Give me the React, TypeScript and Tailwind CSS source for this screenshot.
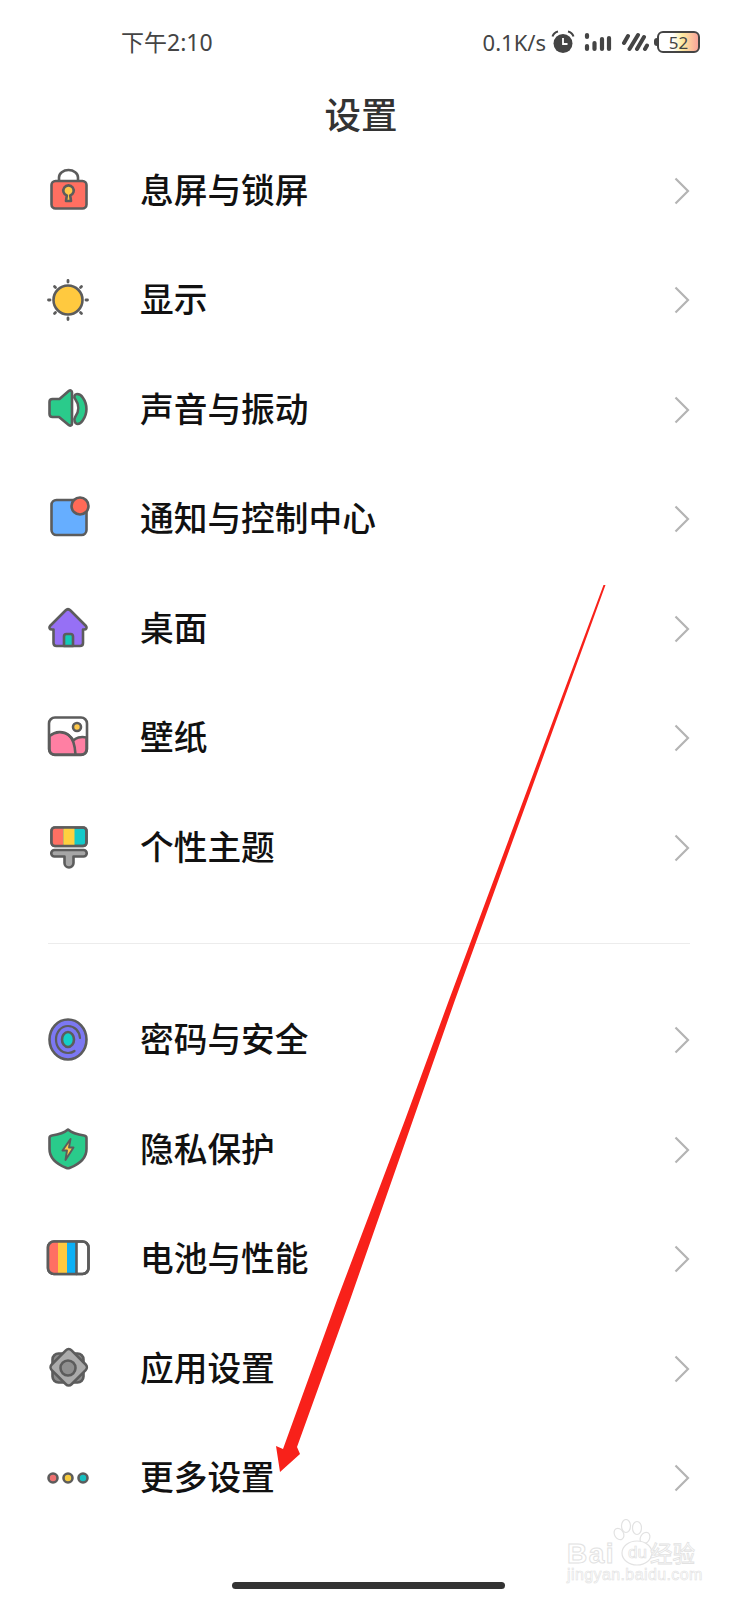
import type { ReactNode } from "react";

const ink = "#5c5c5c";

function Icon({ children }: { children: ReactNode }) {
  return (
    <svg width="48" height="48" viewBox="0 0 48 48" fill="none" stroke={ink} strokeWidth="2.600" strokeLinejoin="round" strokeLinecap="round" className="shrink-0">
      {children}
    </svg>
  );
}

const LockIcon = (
  <Icon>
    <path d="M15 14v-3.500a9.500 7.500 0 0 1 19 0V14" />
    <rect x="7.500" y="14" width="35" height="27.500" rx="4" fill="#FF6F61" />
    <path d="M22.500 34.500l.8-5.500a5.200 5.200 0 1 1 3.400 0l.8 5.500z" fill="#FFC94A" transform="translate(-.5 -.5)" />
  </Icon>
);

const SunIcon = (
  <Icon>
    <circle cx="24" cy="24" r="14.500" fill="#FFC93F" />
    <g strokeWidth="2.800">
      <path d="M24 4.500v1.500M24 42v1.500M4.500 24H6M42 24h1.500M10.500 10.500l1 1M36.500 36.500l1 1M37.500 10.500l-1 1M11.500 36.500l-1 1" />
    </g>
  </Icon>
);

const SoundIcon = (
  <Icon>
    <path d="M8.500 12h7L25 3.800c1.500-1 3-.3 3 1.700v31c0 2-1.500 2.700-3 1.700L15 30H8.500C6.500 30 5.500 29 5.500 27V15c0-2 1-3 3-3z" fill="#2ACB8B" transform="translate(0 1)" />
    <path d="M33 8c-2.500 0-3.500 3 -1.800 5 4 5.500 4 12.500 0 18-1.700 2.500-.5 7 2.500 7 2.500 0 4-2 5-3.500 5-7 5-16 0-23C37.500 9.500 35.500 8 33 8z" fill="#2ACB8B" />
  </Icon>
);

const NotifyIcon = (
  <Icon>
    <rect x="7.500" y="5" width="35" height="35" rx="5" fill="#66AEFF" />
    <circle cx="36" cy="11" r="8.500" fill="#FF6A57" />
  </Icon>
);

const HomeIcon = (
  <Icon>
    <path d="M9.500 24.500H8c-2.500 0-3.200-2-2-3.500L21.500 5.500c1.500-1.500 3.500-1.500 5 0L42 21c1.200 1.500.5 3.500-2 3.500h-1v13.500c0 2-1 3-3 3H12.500c-2 0-3-1-3-3z" fill="#9670F5" />
    <path d="M20 41V31.500c0-1.500 1-2.500 2.500-2.500h4c1.500 0 2.500 1 2.500 2.500V41z" fill="#14C9B8" />
  </Icon>
);

const WallpaperIcon = (
  <Icon>
    <rect x="5" y="3.500" width="38" height="37.500" rx="6" fill="#fff" />
    <path d="M5.500 22c6-5 14-5 19 -1 2.500 2 4 4 5 5.500 2-2.500 7-4.500 13-3V35c0 3.500-2 5.500-5.500 5.500h-26C7.500 40.500 5.500 38.500 5.500 35z" fill="#FF7FA3" />
    <path d="M24.500 21c4.500 3.500 6.500 9.500 7 19.500" />
    <circle cx="33" cy="13" r="4" fill="#FFC94A" />
  </Icon>
);

const ThemeIcon = (
  <Icon>
    <rect x="7.500" y="3.500" width="35" height="18.500" rx="3.500" fill="#14C9C9" />
    <path d="M11 3.500h8.500V22H11c-2.300 0-3.500-1.200-3.500-3.500v-11C7.500 4.700 8.700 3.500 11 3.500z" fill="#FF7063" stroke="none" />
    <rect x="19.500" y="3.500" width="11" height="18.500" fill="#FFD03F" stroke="none" />
    <rect x="7.500" y="3.500" width="35" height="18.500" rx="3.500" />
    <path d="M10.500 26h29a3 3 0 0 1 0 6.500H29.500V39a4.500 4.500 0 0 1-9 0v-6.500h-10a3 3 0 0 1 0-6.500z" fill="#A6A6A6" />
  </Icon>
);

const PasswordIcon = (
  <Icon>
    <ellipse cx="24" cy="23.500" rx="18.500" ry="20" fill="#7C78F2" />
    <path d="M30.500 35c-2 1.500-4 2-6.500 2-7 0-12-6-12-13.500S17 10 24 10c6.500 0 11.500 5 12 12" strokeWidth="2.200" />
    <ellipse cx="24" cy="23.500" rx="6" ry="7.500" fill="#14CFC9" />
  </Icon>
);

const PrivacyIcon = (
  <Icon>
    <path d="M24 3.500c3.500 3 9 5 16 6 1.500.2 2.500 1 2.500 2.500v11c0 9.500-8 15.500-17 19-1 .4-2 .4-3 0C13.500 38.500 5.500 32.500 5.500 23V12c0-1.500 1-2.300 2.500-2.500 7-1 12.500-3 16-6z" fill="#2ACB8B" />
    <path d="M26.500 13L18.500 24.500H23L21.500 34 29.500 21.500H25z" fill="#FFC94A" strokeWidth="1.900" />
  </Icon>
);

const BatteryIcon = (
  <Icon>
    <rect x="4" y="6.500" width="40.500" height="32.500" rx="6" fill="#fff" />
    <path d="M10 6.500h4V39h-4c-4 0-6-2-6-6V12.500c0-4 2-6 6-6z" fill="#FF7063" stroke="none" />
    <rect x="14" y="6.500" width="9" height="32.500" fill="#FFC93F" stroke="none" />
    <rect x="23" y="6.500" width="9" height="32.500" fill="#0DB0F5" stroke="none" />
    <path d="M32.500 7v32" />
    <rect x="4" y="6.500" width="40.500" height="32.500" rx="6" />
  </Icon>
);

const AppsIcon = (
  <Icon>
    <rect x="8.500" y="8.500" width="31" height="29" rx="6" fill="#8c8c8c" />
    <rect x="10" y="8" width="28" height="28" rx="4" fill="#ABABAB" transform="rotate(45 24 23)" />
    <circle cx="24" cy="23" r="7.500" fill="#8f8f8f" />
  </Icon>
);

const MoreIcon = (
  <Icon>
    <circle cx="9" cy="24" r="4.500" fill="#EE7070" />
    <circle cx="24" cy="24" r="4.500" fill="#F7CB3E" />
    <circle cx="39" cy="24" r="4.500" fill="#16BFC0" />
  </Icon>
);

const firstGroup = [
  { label: "息屏与锁屏", icon: LockIcon },
  { label: "显示", icon: SunIcon },
  { label: "声音与振动", icon: SoundIcon },
  { label: "通知与控制中心", icon: NotifyIcon },
  { label: "桌面", icon: HomeIcon },
  { label: "壁纸", icon: WallpaperIcon },
  { label: "个性主题", icon: ThemeIcon },
];

const secondGroup = [
  { label: "密码与安全", icon: PasswordIcon },
  { label: "隐私保护", icon: PrivacyIcon },
  { label: "电池与性能", icon: BatteryIcon },
  { label: "应用设置", icon: AppsIcon },
  { label: "更多设置", icon: MoreIcon },
];

function Row({ label, icon }: { label: string; icon: ReactNode }) {
  return (
    <div className="flex h-[109.5px] items-center pl-[44px] pr-[48px]">
      {icon}
      <span className="ml-[48px] flex-1 text-[33.700px] font-medium leading-none text-[#111]">{label}</span>
      <svg width="16" height="28" viewBox="0 0 16 28" fill="none" stroke="#b4b4b4" strokeWidth="2.200">
        <path d="M1.500 1.500L14 14 1.500 26.500" />
      </svg>
    </div>
  );
}

function StatusBar() {
  return (
    <div className="flex h-[84px] items-center pl-[121px] pr-[38px] text-[#444]">
      <span className="flex-1 text-[23px] leading-none">下午2:10</span>
      <span className="text-[22px] leading-none">0.1K/s</span>
      <svg width="24" height="24" viewBox="0 0 24 24" className="ml-[5px]" fill="#444">
        <circle cx="12" cy="13.500" r="9.500" />
        <path d="M12 8v6h4.500" stroke="#fff" strokeWidth="1.800" fill="none" />
        <path d="M1.500 6.500C2.500 3.500 4.500 2 7 1.500M22.500 6.500C21.500 3.500 19.500 2 17 1.500" stroke="#444" strokeWidth="2" fill="none" />
      </svg>
      <svg width="28" height="20" viewBox="0 0 28 20" className="ml-[9px]" stroke="#444" strokeWidth="4.200" strokeLinecap="round">
        <path d="M3 3v2M3 14v3M10.500 11v6M18 7v10M25 6v11" />
      </svg>
      <svg width="28" height="20" viewBox="0 0 28 20" className="ml-[9px]" stroke="#444" strokeWidth="4" strokeLinecap="round">
        <path d="M3 11l4-7M8.500 17L17 3M16 17l7-12M24 17l2-3.500" />
      </svg>
      <div className="ml-[5px] flex items-center">
        <div className="h-[8px] w-[3px] rounded-l-sm bg-[#444]" />
        <div className="flex h-[22px] w-[43px] items-center justify-center rounded-[6px] border-2 border-[#444] bg-linear-to-r from-white from-[35%] via-[#fdeb9f] via-[60%] to-[#f9a49a] text-[17px] leading-none">
          52
        </div>
      </div>
    </div>
  );
}

function Watermark() {
  return (
    <div className="absolute left-[566px] top-[1519px] h-[64px] w-[132px] font-['Liberation_Sans',sans-serif] text-white">
      <svg width="50" height="50" viewBox="0 0 50 50" fill="#fff" stroke="#e2e2e2" strokeWidth="1.200" className="absolute left-[44px] top-0">
        <ellipse cx="9" cy="15" rx="4.500" ry="6" transform="rotate(-30 9 15)" />
        <ellipse cx="16" cy="7" rx="4.500" ry="6.500" />
        <ellipse cx="27" cy="9" rx="4.500" ry="6.500" />
        <ellipse cx="35" cy="19" rx="4.500" ry="6" transform="rotate(30 35 19)" />
        <ellipse cx="27" cy="34" rx="15" ry="12" />
      </svg>
      <span className="absolute left-[1px] top-[21px] text-[28px] font-bold leading-none tracking-[1.500px] [-webkit-text-stroke:1px_#e2e2e2]">Bai</span>
      <span className="absolute left-[62px] top-[25px] text-[17px] leading-none [-webkit-text-stroke:.7px_#e2e2e2]">du</span>
      <span className="absolute left-[84px] top-[22px] font-['Noto_Sans_CJK_SC',sans-serif] text-[22.500px] leading-none [-webkit-text-stroke:.8px_#e2e2e2]">经验</span>
      <span className="absolute left-[1px] top-[48px] whitespace-nowrap text-[16px] leading-none tracking-[.4px] [-webkit-text-stroke:.6px_#e2e2e2]">jingyan.baidu.com</span>
    </div>
  );
}

export default function App() {
  return (
    <div className="relative h-[1600px] w-[738px] overflow-hidden bg-white font-['Noto_Sans','Noto_Sans_CJK_SC',sans-serif]">
      <StatusBar />
      <div className="flex h-[52px] items-center justify-center pr-[16px] pt-[11px] text-[36.500px] font-medium leading-none text-[#333]">
        设置
      </div>
      {firstGroup.map((item) => (
        <Row key={item.label} {...item} />
      ))}
      <div className="mb-[42px] ml-[48px] mt-[40px] h-px w-[642px] bg-[#ececec]" />
      {secondGroup.map((item) => (
        <Row key={item.label} {...item} />
      ))}
      <div className="ml-[232px] mt-[49px] h-[7px] w-[273px] rounded-full bg-[#333]" />

      <Watermark />

      {/* red annotation arrow */}
      <svg width="738" height="1600" viewBox="0 0 738 1600" className="pointer-events-none absolute left-0 top-0">
        <path d="M605.500 585L455 1000 413 1120 350 1300 297 1447 300 1454 280 1472 276 1446 283 1449 337 1300 405 1120 449 1000 603.500 585z" fill="#F8211A" />
      </svg>
    </div>
  );
}
